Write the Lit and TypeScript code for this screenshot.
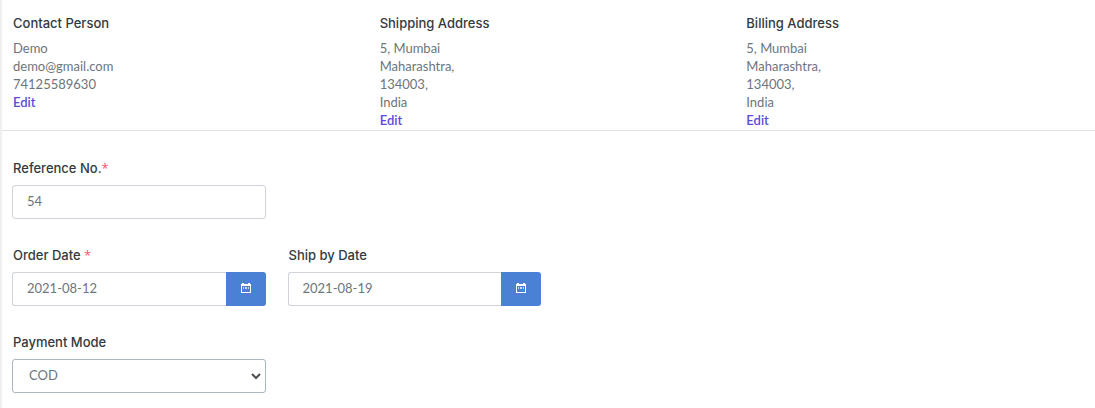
import { LitElement, html, css, nothing } from "lit";
import { customElement, property } from "lit/decorators.js";

interface Contact {
  title: string;
  lines: string[];
}

const contacts: Contact[] = [
  { title: "Contact Person", lines: ["Demo", "demo@gmail.com", "74125589630"] },
  { title: "Shipping Address", lines: ["5, Mumbai", "Maharashtra,", "134003,", "India"] },
  { title: "Billing Address", lines: ["5, Mumbai", "Maharashtra,", "134003,", "India"] },
];

@customElement("contact-card")
export class ContactCard extends LitElement {
  @property({ attribute: false }) contact!: Contact;

  static styles = css`
    :host {
      display: block;
      line-height: 18px;
    }
    .title {
      margin: 0 0 7px;
      font: 500 13px/18px Inter, sans-serif;
      color: #343a40;
    }
    .address {
      font-style: normal;
    }
    .edit {
      color: #5b4bdb;
      font-weight: 600;
      text-decoration: none;
    }
  `;

  render() {
    return html`
      <h2 class="title">${this.contact.title}</h2>
      <address class="address">
        ${this.contact.lines.map((line) => html`<div>${line}</div>`)}
      </address>
      <a class="edit" href="#">Edit</a>
    `;
  }
}

@customElement("app-root")
export class AppRoot extends LitElement {
  static styles = css`
    :host {
      display: block;
      box-sizing: border-box;
      min-height: 100vh;
      border-left: 2px solid #f0f0f1;
      background: #fff;
      color: #6c757d;
      font: 13px/18px Lato, sans-serif;
    }
    .contacts {
      display: grid;
      grid-template-columns: repeat(3, 1fr);
      column-gap: 18px;
      padding: 14px 0 1px 11px;
      border-bottom: 1px solid #dee2e6;
    }
    .form {
      display: grid;
      grid-template-columns: repeat(4, 1fr);
      gap: 27px 22px;
      padding: 28px 3px 15px 10px;
    }
    .first {
      grid-column: 1;
    }
    .label {
      display: block;
      margin: 0 0 8px 1px;
      font: 500 13px/18px Inter, sans-serif;
      color: #343a40;
    }
    .required {
      color: #f1556c;
      font: 400 13px/1 "Open Sans", sans-serif;
    }
    .control {
      display: block;
      box-sizing: border-box;
      width: 100%;
      min-width: 0;
      height: 34px;
      padding: 0 14px 2px;
      border: 1px solid #ced4da;
      border-radius: 3px;
      background: #fff;
      color: #6c757d;
      font: inherit;
    }
    .group {
      display: flex;
    }
    .group .control {
      flex: 1;
      border-right: 0;
      border-radius: 3px 0 0 3px;
    }
    .pick {
      display: grid;
      place-items: center;
      width: 40px;
      height: 34px;
      padding: 0 0 2px;
      border: 0;
      border-radius: 0 3px 3px 0;
      background: #4a81d4;
      color: #fff;
    }
    .picker {
      display: grid;
      align-items: center;
    }
    .picker > * {
      grid-area: 1 / 1;
    }
    .select {
      appearance: none;
      padding: 0 16px 2px;
      border-color: #adb5bd;
    }
    .chevron {
      justify-self: end;
      margin-right: 4px;
      pointer-events: none;
      color: #495057;
    }
  `;

  private dateField(id: string, label: string, value: string, required: boolean) {
    return html`
      <div>
        <label class="label" for=${id}
          >${label}${required ? html` <span class="required">*</span>` : nothing}</label
        >
        <div class="group">
          <input class="control" id=${id} type="text" .value=${value} />
          <button class="pick" type="button" aria-label="Choose ${label}">
            <svg width="10" height="10" viewBox="0 0 10 10" fill="currentColor">
              <path fill-rule="evenodd" d="M1 0h2v1h4V0h2v1h1v9H0V1h1zM1 3v6h8V3z" />
              <path d="M2 4h1v2H2zM4 4h2v2H4zM7 4h1v2H7z" opacity=".7" />
            </svg>
          </button>
        </div>
      </div>
    `;
  }

  render() {
    return html`
      <section class="contacts">
        ${contacts.map((c) => html`<contact-card .contact=${c}></contact-card>`)}
      </section>
      <form class="form">
        <div class="first">
          <label class="label" for="reference">Reference No.<span class="required">*</span></label>
          <input class="control" id="reference" type="text" .value=${"54"} />
        </div>
        <div class="first">${this.dateField("order-date", "Order Date", "2021-08-12", true)}</div>
        ${this.dateField("ship-date", "Ship by Date", "2021-08-19", false)}
        <div class="first">
          <label class="label" for="payment">Payment Mode</label>
          <div class="picker">
            <select class="control select" id="payment">
              <option>COD</option>
            </select>
            <svg class="chevron" width="12" height="8" viewBox="0 0 12 8" fill="none">
              <path d="M2 2l4 4 4-4" stroke="currentColor" stroke-width="2" />
            </svg>
          </div>
        </div>
      </form>
    `;
  }
}
